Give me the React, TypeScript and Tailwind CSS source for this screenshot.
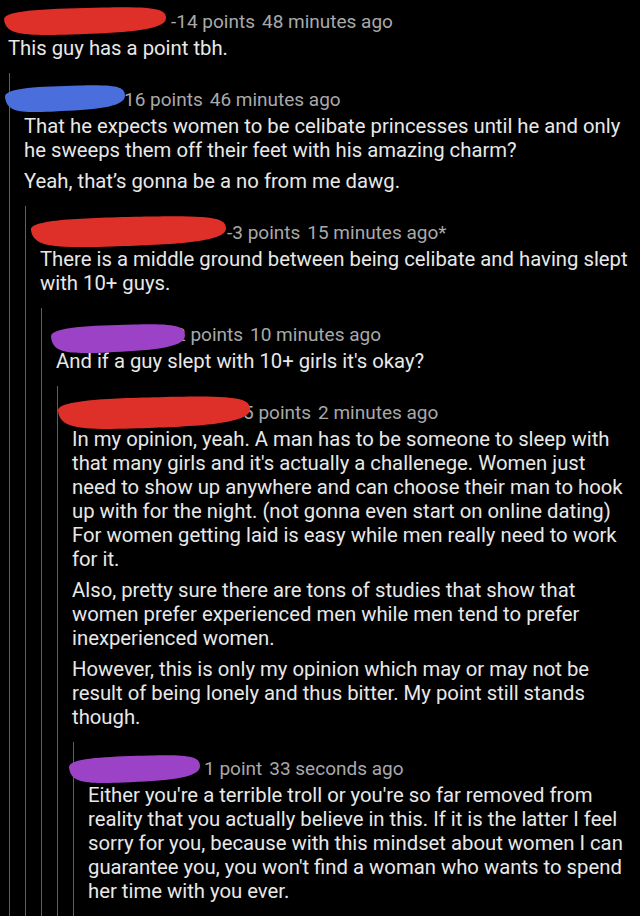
import React from "react";

type Blob = { color: string; left: number; top: number; w: number; h: number };

type CommentData = {
  blob: Blob;
  offset: number;
  meta: string;
  paras: string[][];
};

const RED = "#de3029";
const BLUE = "#4a6fdc";
const PURPLE = "#9c42c6";

const comments: CommentData[] = [
  {
    blob: { color: RED, left: -5, top: -3, w: 163, h: 28 },
    offset: 163,
    meta: "-14 points",
    paras: [["This guy has a point tbh."]],
  },
  {
    blob: { color: BLUE, left: -20, top: -3, w: 121, h: 27 },
    offset: 100,
    meta: "16 points",
    paras: [
      [
        "That he expects women to be celibate princesses until he and only",
        "he sweeps them off their feet with his amazing charm?",
      ],
      ["Yeah, that\u2019s gonna be a no from me dawg."],
    ],
  },
  {
    blob: { color: RED, left: -10, top: -5, w: 196, h: 31 },
    offset: 187,
    meta: "-3 points",
    paras: [
      [
        "There is a middle ground between being celibate and having slept",
        "with 10+ guys.",
      ],
    ],
  },
  {
    blob: { color: PURPLE, left: -6, top: 1, w: 135, h: 29 },
    offset: 119,
    meta: "2 points",
    paras: [["And if a guy slept with 10+ girls it's okay?"]],
  },
  {
    blob: { color: RED, left: -15, top: -5, w: 193, h: 33 },
    offset: 171,
    meta: "5 points",
    paras: [
      [
        "In my opinion, yeah. A man has to be someone to sleep with",
        "that many girls and it's actually a challenege. Women just",
        "need to show up anywhere and can choose their man to hook",
        "up with for the night. (not gonna even start on online dating)",
        "For women getting laid is easy while men really need to work",
        "for it.",
      ],
      [
        "Also, pretty sure there are tons of studies that show that",
        "women prefer experienced men while men tend to prefer",
        "inexperienced women.",
      ],
      [
        "However, this is only my opinion which may or may not be",
        "result of being lonely and thus bitter. My point still stands",
        "though.",
      ],
    ],
  },
  {
    blob: { color: PURPLE, left: -20, top: -2, w: 132, h: 28 },
    offset: 116,
    meta: "1 point",
    paras: [
      [
        "Either you're a terrible troll or you're so far removed from",
        "reality that you actually believe in this. If it is the latter I feel",
        "sorry for you, because with this mindset about women I can",
        "guarantee you, you won't find a woman who wants to spend",
        "her time with you ever.",
      ],
    ],
  },
];

const ages = [
  "48 minutes ago",
  "46 minutes ago",
  "15 minutes ago*",
  "10 minutes ago",
  "2 minutes ago",
  "33 seconds ago",
];

// marker scribble over the username
const Scribble = ({ blob }: { blob: Blob }) => {
  const { w, h } = blob;
  const d = `M 1 ${h * 0.45} C 0 ${h * 0.1}, ${w * 0.3} ${h * 0.06}, ${w * 0.62} ${h * 0.02} S ${w} ${h * 0.08}, ${w} ${h * 0.4} C ${w} ${h * 0.85}, ${w * 0.72} ${h * 0.92}, ${w * 0.42} ${h * 0.98} S 3 ${h}, 1 ${h * 0.45} Z`;
  return (
    <svg
      className="absolute"
      style={{ left: blob.left, top: blob.top }}
      width={w}
      height={h}
      viewBox={`0 0 ${w} ${h}`}
    >
      <path d={d} fill={blob.color} />
    </svg>
  );
};

const Comment = ({ i, first }: { i: number; first?: boolean }) => {
  const c = comments[i];
  const child = i + 1 < comments.length;
  return (
    <div>
      <div className={first ? "pt-[10px] pb-[13px]" : "pt-[15px] pb-[13px]"}>
        <div className="relative flex text-[19px] leading-6 text-[#a9a9a9]">
          <span className="shrink-0" style={{ width: c.offset }} />
          <span>{c.meta}</span>
          <span className="ml-[7px]">{ages[i]}</span>
          <Scribble blob={c.blob} />
        </div>
        <div className="mt-[2px] text-[20.3px] leading-6 text-[#e8e8e8]">
          {c.paras.map((p, k) => (
            <p key={k} className={k > 0 ? "mt-[7px]" : ""}>
              {p.map((line, j) => (
                <span key={j} className="block whitespace-nowrap">
                  {line}
                </span>
              ))}
            </p>
          ))}
        </div>
      </div>
      {child && (
        <div className="ml-[1px] border-l border-[#5f5f5f] pl-[14px]">
          <Comment i={i + 1} />
        </div>
      )}
    </div>
  );
};

export default function App() {
  return (
    <div
      className="h-[916px] w-[640px] overflow-hidden bg-black pl-2"
      style={{ fontFamily: "Roboto, 'Noto Sans', sans-serif" }}
    >
      <Comment i={0} first />
    </div>
  );
}
